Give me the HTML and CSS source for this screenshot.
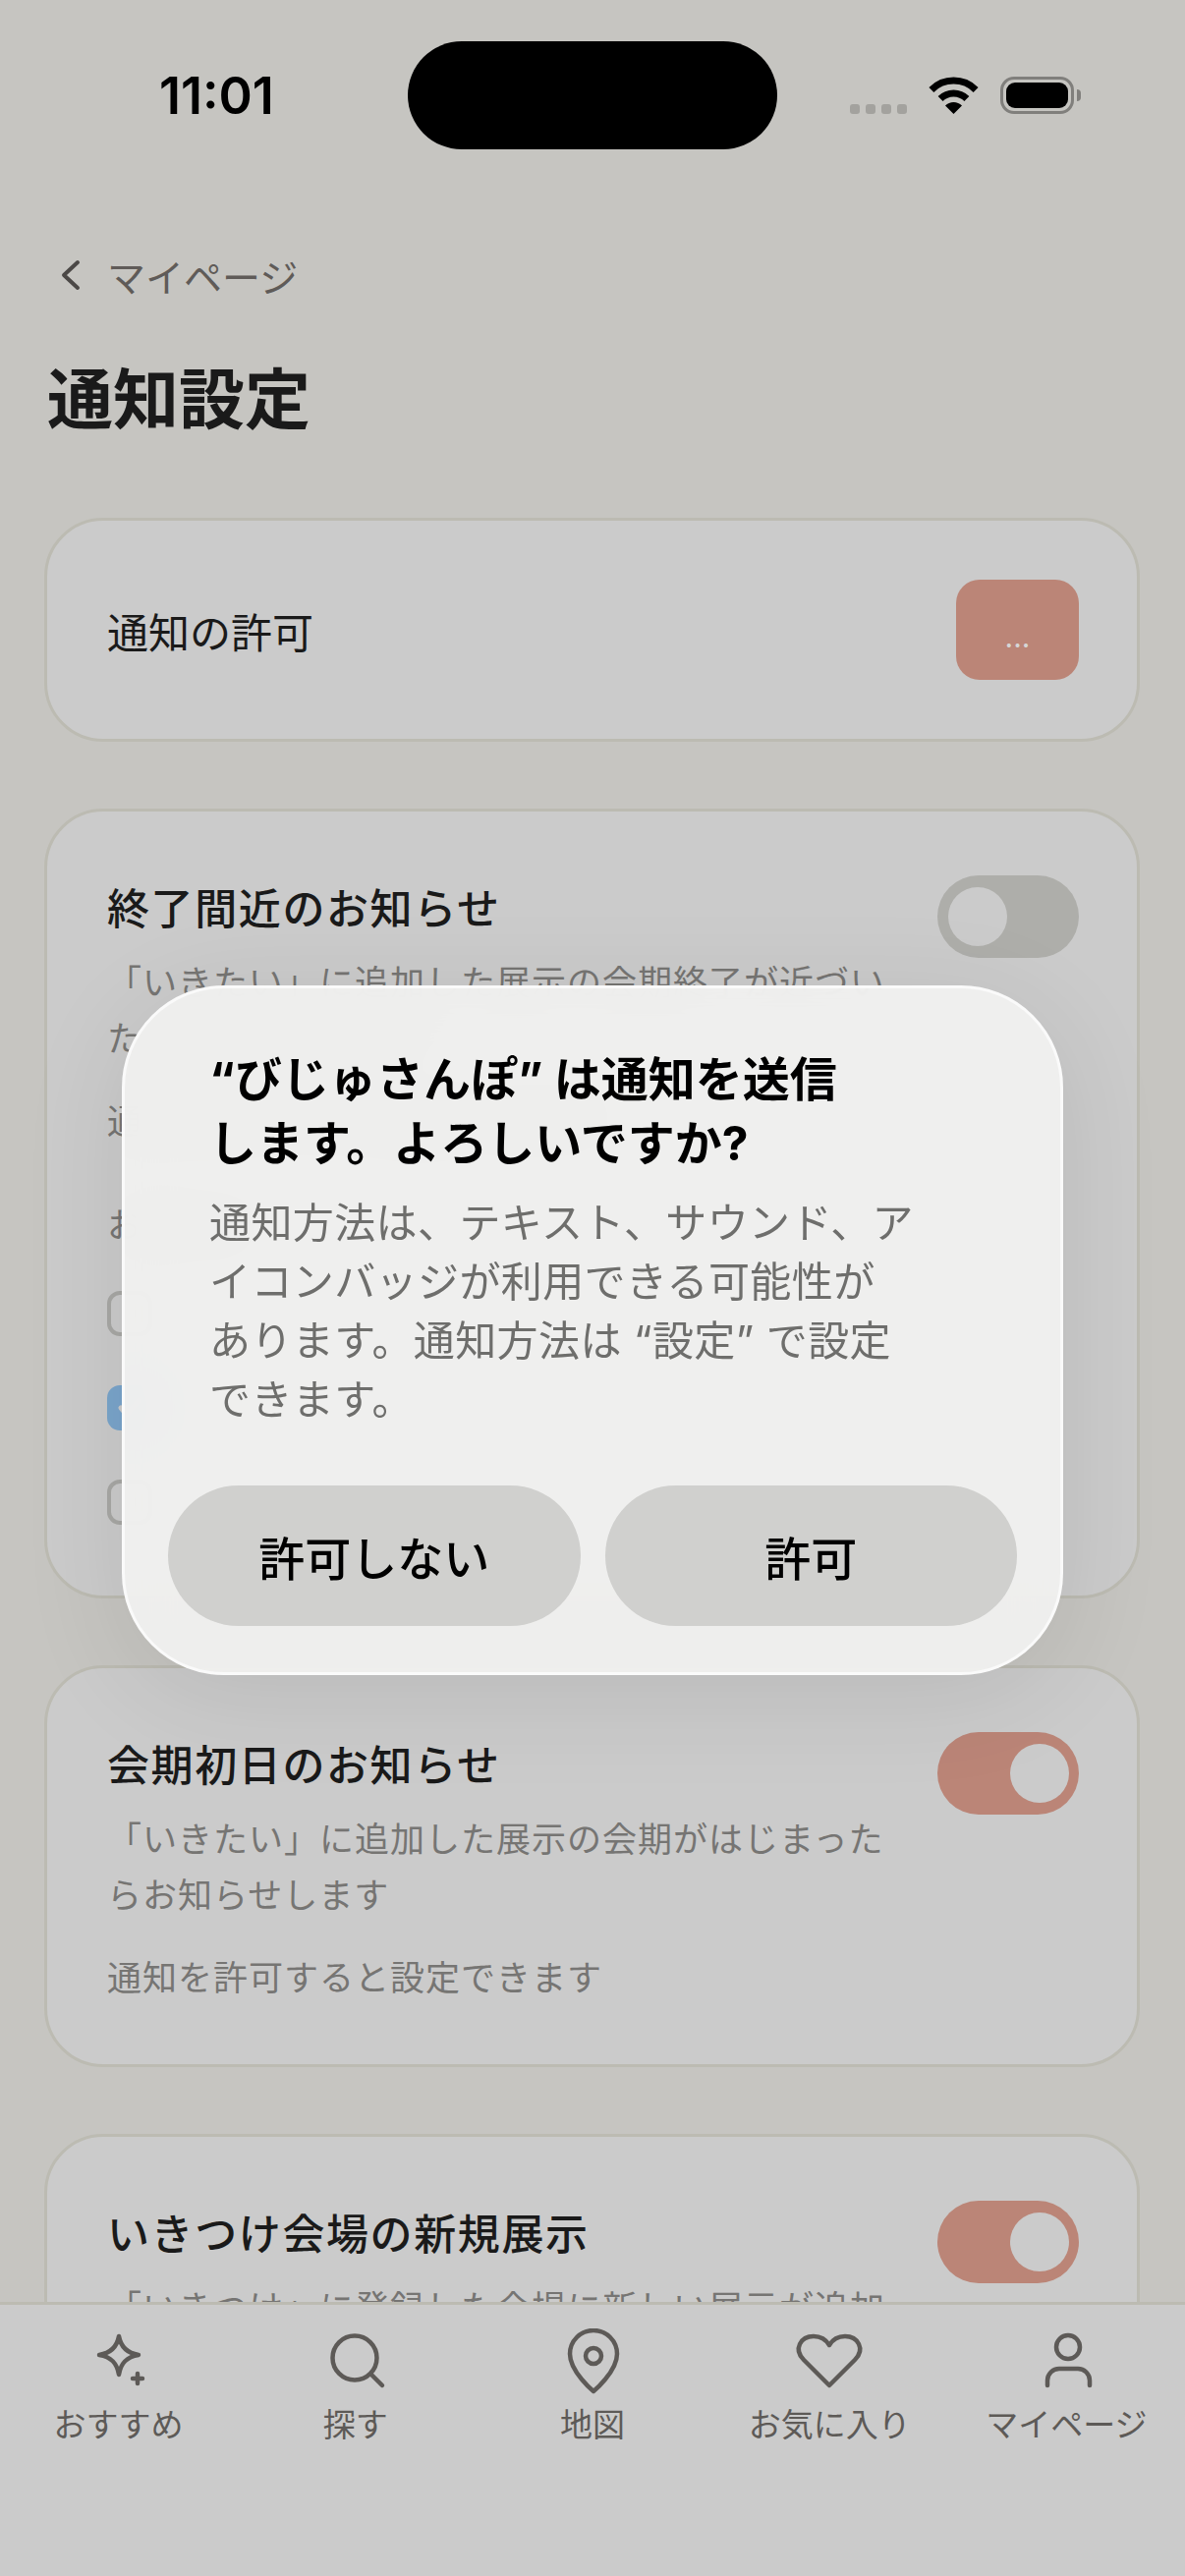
FILE: index.html
```html
<!DOCTYPE html>
<html lang="ja">

<head>
    <meta charset="UTF-8">
    <meta name="viewport" content="width=device-width, initial-scale=1.0">
    <title>通知設定</title>
    <link rel="stylesheet" href="styles.css">
</head>

<body>
    <div class="screen">
        <!-- Status bar -->
        <div class="status-bar">
            <span class="time">11:01</span>
            <div class="island"></div>
            <div class="status-icons">
                <div class="signal"><i></i><i></i><i></i><i></i></div>
                <svg class="wifi" width="51" height="38" viewBox="0 0 51 38">
                    <path d="M2.9 13.4A32 32 0 0 1 48.1 13.4" fill="none" stroke="#000" stroke-width="7" />
                    <path d="M12.1 22.6A19 19 0 0 1 38.9 22.6" fill="none" stroke="#000" stroke-width="7" />
                    <path d="M25.5 38L17 29.5A12 12 0 0 1 34 29.5Z" fill="#000" />
                </svg>
                <div class="battery"><div class="battery-level"></div></div>
                <div class="battery-nub"></div>
            </div>
        </div>

        <main class="content">
            <a class="back" href="#">
                <svg width="20" height="32" viewBox="0 0 20 32">
                    <path d="M17 3L3 16L17 29" fill="none" stroke="#4b4846" stroke-width="4" stroke-linecap="round" stroke-linejoin="round" />
                </svg>
                <span>マイページ</span>
            </a>
            <h1 class="page-title">通知設定</h1>

            <section class="card card-permission">
                <span class="permission-label">通知の許可</span>
                <button class="permission-button">...</button>
            </section>

            <section class="card">
                <div class="card-head">
                    <div class="card-text">
                        <h2 class="card-title">終了間近のお知らせ</h2>
                        <p class="card-desc">「いきたい」に追加した展示の会期終了が近づいたらお知らせします</p>
                    </div>
                    <div class="toggle"></div>
                </div>
                <p class="card-note">通知を許可すると設定できます</p>
                <p class="group-label">お知らせ</p>
                <ul class="check-list">
                    <li class="check-item"><span class="check-box"></span></li>
                    <li class="check-item">
                        <span class="check-box is-checked">
                            <svg width="30" height="30" viewBox="0 0 30 30">
                                <path d="M6 15L12 22L24 8" fill="none" stroke="#cbcbcb" stroke-width="5" stroke-linecap="round" stroke-linejoin="round" />
                            </svg>
                        </span>
                    </li>
                    <li class="check-item"><span class="check-box"></span></li>
                </ul>
            </section>

            <section class="card">
                <div class="card-head">
                    <div class="card-text">
                        <h2 class="card-title">会期初日のお知らせ</h2>
                        <p class="card-desc">「いきたい」に追加した展示の会期がはじまったらお知らせします</p>
                    </div>
                    <div class="toggle is-on"></div>
                </div>
                <p class="card-note">通知を許可すると設定できます</p>
            </section>

            <section class="card">
                <div class="card-head">
                    <div class="card-text">
                        <h2 class="card-title">いきつけ会場の新規展示</h2>
                        <p class="card-desc">「いきつけ」に登録した会場に新しい展示が追加されたらお知らせします</p>
                    </div>
                    <div class="toggle is-on"></div>
                </div>
            </section>
        </main>

        <!-- Bottom tabs -->
        <nav class="tab-bar">
            <a class="tab" href="#">
                <svg class="tab-icon" viewBox="0 0 80 70">
                    <path d="M40 8C42 19 48 25 60 27C48 29 42 35 40 47C38 35 32 29 20 27C32 25 38 19 40 8Z" />
                    <path d="M59 46V56M54 51H64" />
                </svg>
                <span>おすすめ</span>
            </a>
            <a class="tab" href="#">
                <svg class="tab-icon" viewBox="0 0 80 70">
                    <circle cx="39" cy="30" r="22.5" />
                    <path d="M56 47L67 58" />
                </svg>
                <span>探す</span>
            </a>
            <a class="tab" href="#">
                <svg class="tab-icon" viewBox="0 0 80 70">
                    <path d="M41 64C41 64 17 44 17 26A24 24 0 0 1 65 26C65 44 41 64 41 64Z" />
                    <circle cx="41" cy="28" r="8" />
                </svg>
                <span>地図</span>
            </a>
            <a class="tab" href="#">
                <svg class="tab-icon" viewBox="0 0 80 70">
                    <path d="M40 58L14 32C3 21 11 8 24 8C32 8 37 12 40 17C43 12 48 8 56 8C69 8 77 21 66 32Z" />
                </svg>
                <span>お気に入り</span>
            </a>
            <a class="tab" href="#">
                <svg class="tab-icon" viewBox="0 0 80 70">
                    <circle cx="42" cy="19" r="12" />
                    <path d="M21 58V53A12 12 0 0 1 33 41H52A12 12 0 0 1 64 53V58" />
                </svg>
                <span>マイページ</span>
            </a>
        </nav>

        <!-- Permission dialog -->
        <div class="dialog">
            <div class="dialog-text">
                <h2 class="dialog-title">“びじゅさんぽ” は通知を送信します。よろしいですか?</h2>
                <p class="dialog-body">通知方法は、テキスト、サウンド、ア<br>イコンバッジが利用できる可能性が<br>あります。通知方法は “設定” で設定<br>できます。</p>
            </div>
            <div class="dialog-actions">
                <button class="dialog-button">許可しない</button>
                <button class="dialog-button">許可</button>
            </div>
        </div>
    </div>
</body>

</html>
```

FILE: styles.css
```css
* {
    box-sizing: border-box;
}

body {
    margin: 0;
    background-color: #c6c5c1;
    font-family: "Inter", "Noto Sans CJK JP", sans-serif;
    color: #1a1a1a;
}

.screen {
    position: relative;
    width: 1206px;
    height: 2622px;
    overflow: hidden;
    background-color: #c6c5c1;
}

/* Status bar */
.status-bar {
    display: flex;
    align-items: center;
    height: 110px;
    margin-top: 42px;
    padding: 0 106px 0 162px;
    position: absolute;
    top: 0;
    left: 0;
    right: 0;
}

.time {
    width: 253px;
    font-size: 52px;
    font-weight: 600;
    color: #000;
}

.island {
    width: 376px;
    height: 110px;
    border-radius: 55px;
    background-color: #000;
}

.status-icons {
    display: flex;
    align-items: flex-end;
    margin-left: 74px;
    height: 38px;
}

.signal {
    display: flex;
    gap: 6px;
    margin-right: 22px;
}

.signal i {
    width: 10px;
    height: 10px;
    border-radius: 3px;
    background-color: #a3a29e;
}

.wifi {
    margin-right: 22px;
}

.battery {
    width: 75px;
    height: 38px;
    padding: 3px;
    border: 3px solid #807f7c;
    border-radius: 14px;
}

.battery-level {
    height: 100%;
    border-radius: 9px;
    background-color: #000;
}

.battery-nub {
    align-self: center;
    width: 4px;
    height: 12px;
    margin-left: 3px;
    border-radius: 0 4px 4px 0;
    background-color: #807f7c;
}

/* Page */
.content {
    padding: 258px 46px 0 45px;
}

.back {
    display: flex;
    align-items: center;
    gap: 27px;
    height: 44px;
    padding-left: 17px;
    font-size: 39px;
    color: #5f5b58;
    text-decoration: none;
}

.page-title {
    margin: 60px 0 0 3px;
    font-size: 67px;
    line-height: 90px;
    font-weight: 700;
    color: #1a1a1a;
}

.card {
    margin-bottom: 68px;
    padding: 65px 59px 59px 61px;
    border: 3px solid #bcbbb2;
    border-radius: 60px;
    background-color: #cbcbcb;
}

.card-permission {
    display: flex;
    align-items: center;
    justify-content: space-between;
    height: 228px;
    margin-top: 75px;
    padding-top: 0;
    padding-bottom: 0;
}

.permission-label {
    font-size: 42px;
    color: #1a1a1a;
}

.permission-button {
    width: 125px;
    height: 102px;
    border: none;
    border-radius: 24px;
    background-color: #bb8577;
    color: #d6d6d6;
    font-size: 30px;
    font-family: "Inter", sans-serif;
    padding-top: 14px;
}

.card-head {
    display: flex;
    justify-content: space-between;
    align-items: flex-start;
}

.card-text {
    width: 800px;
}

.card-title {
    margin: 0 0 13px;
    font-size: 43px;
    line-height: 68px;
    font-weight: 500;
    letter-spacing: 1.6px;
    color: #1a1a1a;
}

.card-desc,
.card-note,
.group-label {
    margin: 0;
    font-size: 35px;
    line-height: 57px;
    letter-spacing: 1px;
    color: #767573;
}

.card-note {
    margin-top: 27px;
}

.group-label {
    margin-top: 49px;
}

.toggle {
    flex-shrink: 0;
    position: relative;
    width: 144px;
    height: 84px;
    border-radius: 42px;
    background-color: #aeaeaa;
}

.toggle::after {
    content: "";
    position: absolute;
    top: 12px;
    left: 11px;
    width: 60px;
    height: 60px;
    border-radius: 50%;
    background-color: #cbcbcb;
}

.toggle.is-on {
    background-color: #bb8577;
}

.toggle.is-on::after {
    left: auto;
    right: 10px;
}

.check-list {
    display: flex;
    flex-direction: column;
    gap: 50px;
    list-style-type: none;
    margin: 38px 0 13px;
    padding: 0;
}

.check-item {
    display: flex;
    align-items: center;
    height: 46px;
}

.check-box {
    display: flex;
    align-items: center;
    justify-content: center;
    width: 46px;
    height: 46px;
    border: 4px solid #a8a8a5;
    border-radius: 13px;
}

.check-box.is-checked {
    border: none;
    background-color: #7aa5cb;
}

/* Bottom tabs */
.tab-bar {
    position: absolute;
    left: 0;
    right: 0;
    bottom: 0;
    top: 2343px;
    display: grid;
    grid-template-columns: repeat(5, 1fr);
    align-items: start;
    padding-top: 24px;
    border-top: 3px solid #bcbbb2;
    background-color: #cbcbcb;
}

.tab {
    display: flex;
    flex-direction: column;
    align-items: center;
    font-size: 33px;
    line-height: 42px;
    color: #5d5a57;
    text-decoration: none;
}

.tab-icon {
    width: 80px;
    height: 70px;
    margin-bottom: 7px;
    fill: none;
    stroke: #5d5a57;
    stroke-width: 4.5;
    stroke-linecap: round;
    stroke-linejoin: round;
}

/* Permission dialog */
.dialog {
    position: absolute;
    top: 1003px;
    left: 124px;
    width: 958px;
    height: 702px;
    padding: 60px 44px 0;
    border: 3px solid #fafafa;
    border-radius: 104px;
    background-color: rgba(240, 240, 238, 0.97);
    backdrop-filter: blur(24px);
    box-shadow: 0 20px 110px rgba(0, 0, 0, 0.09);
}

.dialog-text {
    padding-left: 42px;
}

.dialog-title {
    width: 670px;
    margin: 0 0 19px;
    font-size: 48px;
    line-height: 65px;
    font-weight: 700;
    color: #000;
}

.dialog-body {
    margin: 0;
    font-size: 42px;
    line-height: 60px;
    letter-spacing: 0.4px;
    color: #6e6e6c;
}

.dialog-actions {
    display: flex;
    gap: 25px;
    margin-top: 57px;
}

.dialog-button {
    flex: 1;
    height: 143px;
    border: none;
    border-radius: 72px;
    background-color: #d0d0ce;
    color: #000;
    font-family: "Inter", "Noto Sans CJK JP", sans-serif;
    font-size: 47px;
    font-weight: 500;
}
```
